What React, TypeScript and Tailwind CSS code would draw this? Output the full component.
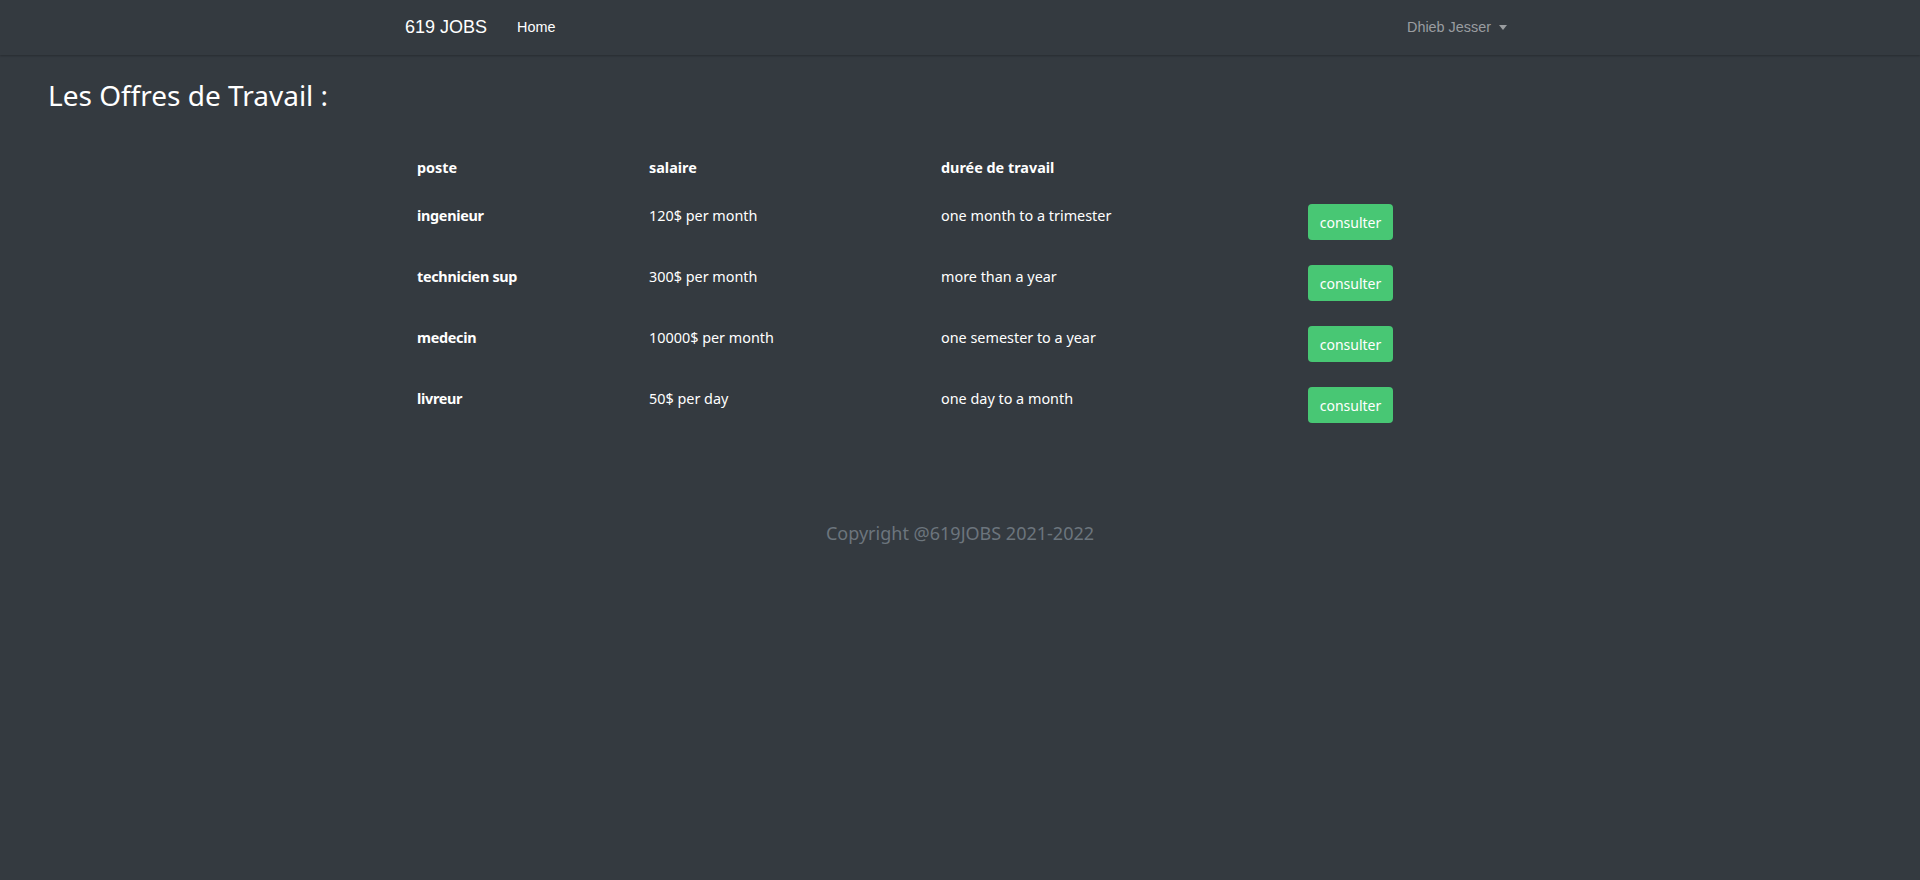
import React from 'react';

const offres = [
  { poste: 'ingenieur', salaire: '120$ per month', duree: 'one month to a trimester' },
  { poste: 'technicien sup', salaire: '300$ per month', duree: 'more than a year' },
  { poste: 'medecin', salaire: '10000$ per month', duree: 'one semester to a year' },
  { poste: 'livreur', salaire: '50$ per day', duree: 'one day to a month' },
];

function Navbar() {
  return (
    <nav className="h-[55px] bg-[#343a40] shadow-[0_1px_2px_rgba(0,0,0,0.25)] font-['Liberation_Sans',Arial,sans-serif]">
      <div className="mx-auto flex h-full w-[1140px] items-center px-[15px]">
        <span className="mr-[22px] text-[18px] text-white">619 JOBS</span>
        <a className="px-2 text-[14.4px] text-white">Home</a>
        <div className="ml-auto flex items-center px-2 text-[14.4px] text-[#9a9da0]">
          Dhieb Jesser
          <span className="ml-[8px] inline-block h-0 w-0 border-x-[4.5px] border-t-[5px] border-x-transparent border-t-[#9a9da0]" />
        </div>
      </div>
    </nav>
  );
}

export default function App() {
  return (
    <div className="min-h-[880px] bg-[#343a40] font-['Noto_Sans',sans-serif] text-white">
      <Navbar />
      <h2 className="ml-[48px] mt-[20px] text-[28px] leading-[40px] text-white">Les Offres de Travail :</h2>

      <div className="mx-auto mt-[29px] w-[1140px] px-[15px]">
        <table className="w-full table-fixed text-[14.4px] leading-[23px]">
          <colgroup>
            <col className="w-[232px]" />
            <col className="w-[292px]" />
            <col className="w-[367px]" />
            <col />
          </colgroup>
          <thead>
            <tr>
              <th className="p-3 text-left align-top font-bold">poste</th>
              <th className="p-3 text-left align-top font-bold">salaire</th>
              <th className="p-3 text-left align-top font-bold">durée de travail</th>
              <th className="p-3" />
            </tr>
          </thead>
          <tbody>
            {offres.map((o) => (
              <tr key={o.poste} className="border-t border-[#343a40]">
                <td className="p-3 align-top font-bold tracking-[-0.3px]">{o.poste}</td>
                <td className="p-3 align-top">{o.salaire}</td>
                <td className="p-3 align-top">{o.duree}</td>
                <td className="p-3 align-top">
                  <button className="h-[36px] w-[85px] rounded-[4px] bg-[#48c774] text-[14px] text-white">
                    consulter
                  </button>
                </td>
              </tr>
            ))}
          </tbody>
        </table>
      </div>

      <footer className="mt-[84px] text-center text-[18px] leading-[28px] text-[#6c757d]">
        Copyright @619JOBS 2021-2022
      </footer>
    </div>
  );
}
